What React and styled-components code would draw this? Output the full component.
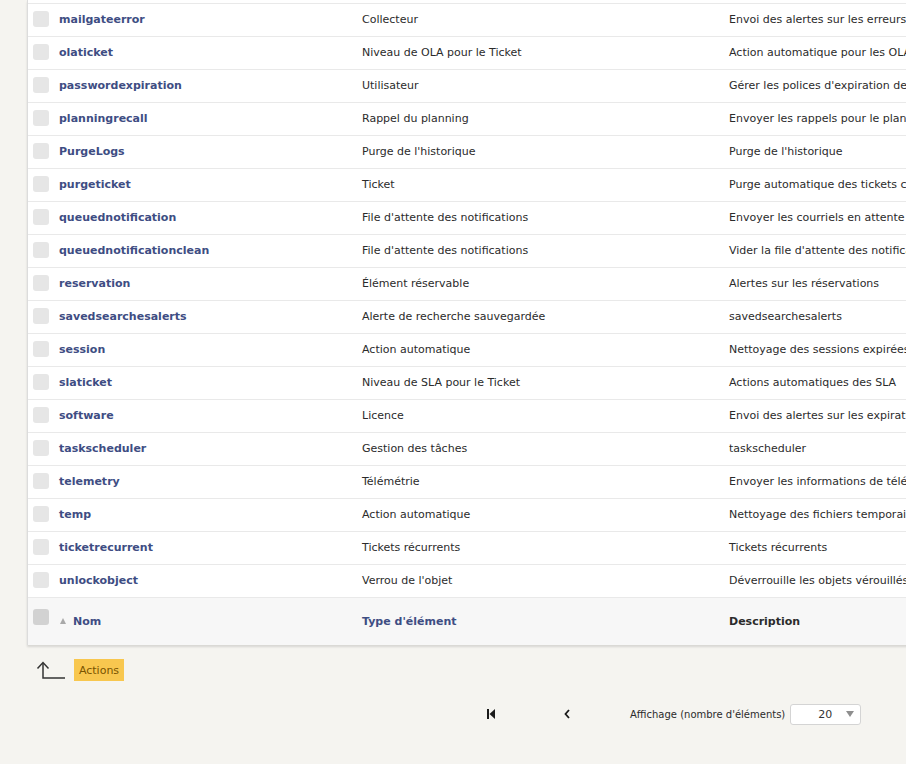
import React from "react";
import styled, { createGlobalStyle } from "styled-components";

const GlobalStyle = createGlobalStyle`
  html, body {
    margin: 0;
    padding: 0;
    background: #f5f4f0;
    overflow: hidden;
  }
  body {
    font-family: "DejaVu Sans", Verdana, sans-serif;
    font-size: 11px;
    color: #2b2b2b;
  }
`;

const rows = [
  ["mailgateerror", "Collecteur", "Envoi des alertes sur les erreurs de collecteur"],
  ["olaticket", "Niveau de OLA pour le Ticket", "Action automatique pour les OLA"],
  ["passwordexpiration", "Utilisateur", "Gérer les polices d'expiration de mot de passe"],
  ["planningrecall", "Rappel du planning", "Envoyer les rappels pour le planning"],
  ["PurgeLogs", "Purge de l'historique", "Purge de l'historique"],
  ["purgeticket", "Ticket", "Purge automatique des tickets clos"],
  ["queuednotification", "File d'attente des notifications", "Envoyer les courriels en attente"],
  ["queuednotificationclean", "File d'attente des notifications", "Vider la file d'attente des notifications"],
  ["reservation", "Élément réservable", "Alertes sur les réservations"],
  ["savedsearchesalerts", "Alerte de recherche sauvegardée", "savedsearchesalerts"],
  ["session", "Action automatique", "Nettoyage des sessions expirées"],
  ["slaticket", "Niveau de SLA pour le Ticket", "Actions automatiques des SLA"],
  ["software", "Licence", "Envoi des alertes sur les expirations de licences"],
  ["taskscheduler", "Gestion des tâches", "taskscheduler"],
  ["telemetry", "Télémétrie", "Envoyer les informations de télémétrie"],
  ["temp", "Action automatique", "Nettoyage des fichiers temporaires"],
  ["ticketrecurrent", "Tickets récurrents", "Tickets récurrents"],
  ["unlockobject", "Verrou de l'objet", "Déverrouille les objets vérouillés"],
];

const Page = styled.div`
  padding-left: 27px;
  width: 1200px;
`;

const Table = styled.div`
  width: 1100px;
  background: #fff;
  border-left: 1px solid #dcdcdc;
  box-shadow: 0 2px 2px rgba(0, 0, 0, 0.12);
  padding-top: 3px;
`;

const Row = styled.div`
  display: grid;
  grid-template-columns: 26px 303px 367px 1fr;
  align-items: center;
  height: ${(p) => (p.$head ? "47px" : "30px")};
  padding-bottom: ${(p) => (p.$head ? "0" : "2px")};
  border-top: 1px solid #e9e9e9;
  background: ${(p) => (p.$head ? "#f7f7f7" : "#fff")};
`;

const Cell = styled.div`
  padding-left: 5px;
  white-space: nowrap;
  overflow: hidden;
`;

const CheckCell = styled.div`
  padding-left: 5px;
  align-self: ${(p) => (p.$head ? "start" : "center")};
  padding-top: ${(p) => (p.$head ? "11px" : "0")};
`;

const Check = styled.span`
  display: block;
  width: 16px;
  height: 16px;
  border-radius: 3px;
  background: ${(p) => (p.$dark ? "#d2d2d2" : "#e6e6e6")};
`;

const NameLink = styled.span`
  font-weight: bold;
  color: #3e4d83;
`;

const HeadLabel = styled.span`
  font-weight: bold;
  color: ${(p) => (p.$plain ? "#2b2b2b" : "#3e4d83")};
`;

const SortArrow = styled.span`
  display: inline-block;
  width: 0;
  height: 0;
  border-left: 3.5px solid transparent;
  border-right: 3.5px solid transparent;
  border-bottom: 6px solid #a9a9a9;
  margin: 0 7px 0 1px;
  vertical-align: 1px;
`;

const ActionsBar = styled.div`
  display: flex;
  align-items: center;
  gap: 8px;
  padding: 14px 0 0 9px;
`;

const ActionsButton = styled.span`
  display: inline-flex;
  align-items: center;
  justify-content: center;
  width: 50px;
  height: 22px;
  background: #f8c74f;
  color: #7a5400;
  font-size: 11px;
`;

const Pager = styled.div`
  display: flex;
  align-items: center;
  padding: 22px 0 0 460px;
  height: 22px;
`;

const PagerIcon = styled.span`
  display: inline-flex;
  width: ${(p) => p.$w}px;
  justify-content: flex-start;
`;

const PagerLabel = styled.span`
  margin-left: 60px;
  font-size: 10px;
  color: #2b2b2b;
`;

const Select = styled.div`
  margin-left: 5px;
  width: 71px;
  height: 21px;
  box-sizing: border-box;
  border: 1px solid #d4d4d4;
  border-radius: 3px;
  background: #fff;
  display: flex;
  align-items: center;
  padding-left: 27px;
  gap: 14px;
  font-size: 11px;
  color: #333;
`;

const Caret = styled.span`
  width: 0;
  height: 0;
  border-left: 4px solid transparent;
  border-right: 4px solid transparent;
  border-top: 6px solid #8e8e8e;
`;

export default function App() {
  return (
    <>
      <GlobalStyle />
      <Page>
        <Table>
          {rows.map(([name, type, desc]) => (
            <Row key={name}>
              <CheckCell>
                <Check />
              </CheckCell>
              <Cell>
                <NameLink>{name}</NameLink>
              </Cell>
              <Cell>{type}</Cell>
              <Cell>{desc}</Cell>
            </Row>
          ))}
          <Row $head>
            <CheckCell $head>
              <Check $dark />
            </CheckCell>
            <Cell>
              <SortArrow />
              <HeadLabel>Nom</HeadLabel>
            </Cell>
            <Cell>
              <HeadLabel>Type d'élément</HeadLabel>
            </Cell>
            <Cell>
              <HeadLabel $plain>Description</HeadLabel>
            </Cell>
          </Row>
        </Table>
        <ActionsBar>
          <svg width="30" height="20" viewBox="0 0 30 20">
            <path d="M7 3 V18 H29" fill="none" stroke="#333" strokeWidth="1.5" />
            <path d="M1.5 8.5 L7 2.5 L12.5 8.5" fill="none" stroke="#333" strokeWidth="1.5" />
          </svg>
          <ActionsButton>Actions</ActionsButton>
        </ActionsBar>
        <Pager>
          <PagerIcon $w={77}>
            <svg width="8" height="10" viewBox="0 0 8 10">
              <rect x="0" y="0" width="2" height="10" fill="#1a1a1a" />
              <path d="M8 0 L2.5 5 L8 10 Z" fill="#1a1a1a" />
            </svg>
          </PagerIcon>
          <PagerIcon $w={6}>
            <svg width="6" height="10" viewBox="0 0 6 10">
              <path d="M5 1 L1.5 5 L5 9" fill="none" stroke="#1a1a1a" strokeWidth="1.8" />
            </svg>
          </PagerIcon>
          <PagerLabel>Affichage (nombre d'éléments)</PagerLabel>
          <Select>
            <span>20</span>
            <Caret />
          </Select>
        </Pager>
      </Page>
    </>
  );
}
